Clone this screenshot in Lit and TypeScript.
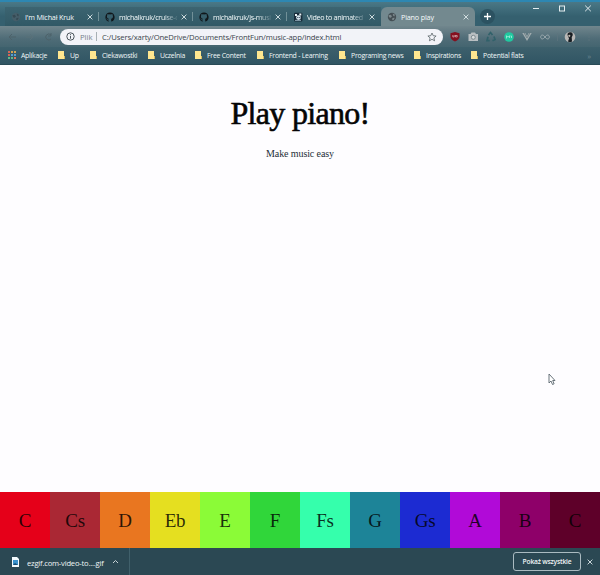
import { LitElement, html, svg, css } from "lit";
import { customElement } from "lit/decorators.js";

const globe = (c: string, d: string) => svg`<circle cx="5" cy="5" r="4.2" fill=${c}/><path d="M1.5 3.2 3.6 2.8 5 4.3 3.8 5.8 2 5.2ZM5.8 1.4 8 2.8 7.2 4.6 6 3.6ZM5.4 6 7.8 5.8 6.4 8.2 5.2 8Z" fill=${d}/>`;
const github = svg`<path fill="#10171b" d="M5 .4a4.7 4.7 0 0 0-1.5 9.1c.3 0 .3-.1.3-.3v-.8c-1.2.2-1.6-.3-1.8-.8-.1-.2-.3-.6-.6-.7-.2-.1-.4-.4 0-.4s.7.4.8.5c.5.8 1.2.6 1.6.4 0-.3.2-.5.3-.7-1.1-.1-2.2-.5-2.2-2.3 0-.5.2-.9.5-1.3 0-.1-.2-.6.1-1.2 0 0 .4-.1 1.300.5a4.3 4.3 0 0 1 2.3 0c.9-.6 1.3-.5 1.3-.5.3.6.1 1.1.1 1.2.3.4.5.8.5 1.3 0 1.8-1.1 2.2-2.2 2.3.2.2.4.5.4.9v1.6c0 .2.1.3.3.3A4.7 4.7 0 0 0 5 .4Z"/>`;
const gif = svg`<rect x="1" y=".8" width="8.4" height="8.6" rx="1" fill="#182c3a"/><path d="M2 2h2v2H2zM6.3 1.5h2v2h-2z" fill="#e9f3f6"/><circle cx="5.5" cy="5.6" r="2.4" fill="#d4e2ea"/><path d="M4.3 5h1v1h-1zM6.3 5h1v1h-1z" fill="#243b52"/><path d="M2 8.4h6" stroke="#8aa3b1"/>`;

const tabs = [
  { title: "I'm Michał Kruk", icon: globe("#455e69", "#354a54") },
  { title: "michalkruk/cruise-c", icon: github, fade: true },
  { title: "michalkruk/js-musi", icon: github, fade: true },
  { title: "Video to animated", icon: gif, fade: true },
  { title: "Piano play", icon: globe("#444f54", "#7c888c"), active: true },
];
const bookmarks: [string, number][] = [
  ["Up", 32], ["Ciekawostki", 58], ["Uczelnia", 47], ["Free Content", 62],
  ["Frontend - Learning", 82], ["Programing news", 75], ["Inspirations", 57], ["Potential flats", 60],
];
const keys: [string, string][] = [
  ["C", "#e50019"], ["Cs", "#aa2834"], ["D", "#e97620"], ["Eb", "#e5df20"],
  ["E", "#8bfb37"], ["F", "#30d63a"], ["Fs", "#35ffac"], ["G", "#1d8498"],
  ["Gs", "#1c2bd2"], ["A", "#b10ad8"], ["B", "#8e0069"], ["C", "#5e0029"],
];
const cross = html`<svg class="cross" viewBox="0 0 6 6"><path d="M.6.6 5.4 5.4M5.4.6.6 5.4"/></svg>`;

@customElement("app-root")
export class AppRoot extends LitElement {
  static styles = css`
    :host { display: flex; flex-direction: column; position: relative; width: 600px; height: 575px; overflow: hidden; background: #fefdff; font-family: "Open Sans", "Noto Sans", sans-serif; }
    * { box-sizing: border-box; }
    svg { display: block; flex: none; }
    .strip { display: flex; height: 26px; padding-left: 5px; border-top: 2px solid #2d87b2; background: linear-gradient(#4a7886, #35606f 60%); }
    .tab { display: flex; align-items: center; width: 94px; height: 19px; margin-top: 5px; padding: 0 6px; gap: 4px; color: #f4fafb; background: linear-gradient(90deg, transparent 93px, #719098 93px) 0 5px / 94px 9px no-repeat, linear-gradient(#3c6471, #315966); }
    .tab.active { background: #73898f; border-radius: 6px 6px 0 0; }
    .tab.before { background: linear-gradient(#3c6471, #315966); }
    .icon { width: 10px; height: 10px; }
    .title { width: 58px; white-space: nowrap; font-size: 7.2px; line-height: 12px; letter-spacing: -.17px; }
    .fade { letter-spacing: -.32px; -webkit-mask-image: linear-gradient(90deg, #000 76%, rgba(0, 0, 0, .15)); }
    .cross { width: 6px; height: 6px; fill: none; stroke: #dce6e9; stroke-width: .9; }
    .plus { width: 15px; height: 15px; margin: 7px 0 0 5px; }
    .window { width: 72px; height: 14px; margin-left: auto; }
    .toolbar { display: flex; align-items: center; height: 21px; background: linear-gradient(#71868d, #4f6c77 60%, #446570); }
    .nav { width: 60px; height: 20px; }
    .address { display: flex; align-items: center; width: 383px; height: 16px; padding: 0 6px; border-radius: 8px; background: #f2f3f8; font-size: 7.7px; color: #39434b; white-space: nowrap; }
    .info { width: 9px; height: 9px; }
    .file { width: 22px; padding-left: 5px; color: #75808a; }
    .divider { width: 1px; height: 9px; margin: 0 5px 0 -1px; background: #a7b0b5; }
    .url { letter-spacing: -.14px; }
    .star { width: 10px; height: 10px; margin-left: auto; }
    .extensions { width: 157px; height: 20px; }
    .bookmarks { display: flex; align-items: center; height: 18px; padding: 0 0 1px 8px; background: linear-gradient(#3d606c, #305564); border-bottom: 1px solid #294b57; color: #f1f7f8; font-size: 6.9px; font-weight: 500; letter-spacing: -.24px; white-space: nowrap; }
    .bookmark { display: flex; align-items: center; height: 16px; }
    .apps { width: 50px; }
    .apps svg { width: 8px; height: 8px; margin-right: 5px; }
    .folder { width: 7px; height: 8px; margin-right: 5px; }
    .more { margin-left: auto; padding-right: 9px; color: #6b858e; font-size: 8px; }
    main { display: flex; flex: 1; flex-direction: column; align-items: center; }
    h1 { margin: 28px 0 0; color: #050505; font: 400 32px/40px "Liberation Serif", serif; letter-spacing: -.7px; -webkit-text-stroke: .6px #050505; }
    .sub { margin: 14px 0 0; font: 10px/14px "Liberation Serif", serif; letter-spacing: -.1px; color: #242d36; }
    .keys { display: grid; grid-template-columns: repeat(12, 50px); height: 56px; }
    .key { display: flex; align-items: center; justify-content: center; padding-top: 1px; font: 19px/22px "Liberation Serif", serif; letter-spacing: -.2px; color: rgba(0, 0, 0, .82); }
    .downloads { display: flex; align-items: center; height: 27px; background: #2b4853; color: #f0f5f6; white-space: nowrap; }
    .item { display: flex; align-items: center; width: 130px; height: 27px; padding-left: 11px; border-right: 1px solid #40606b; }
    .thumb { width: 9px; height: 10px; }
    .name { width: 79px; margin-left: 7px; padding-top: 2px; font-size: 7.6px; letter-spacing: -.2px; }
    .caret { width: 7px; height: 5px; margin-left: 6px; }
    .show { display: flex; align-items: center; justify-content: center; width: 68px; height: 19px; margin-left: auto; border: 1px solid #aabbc1; border-radius: 3px; font-size: 6.7px; font-weight: 600; letter-spacing: -.2px; }
    .downloads > .cross { margin: 0 7px 0 6px; }
    .cursor { position: absolute; left: 548px; top: 373px; width: 8px; height: 13px; }
  `;

  render() {
    return html`
      <div class="strip">
        ${tabs.map((t, i) => html`<div class="tab ${t.active ? "active" : i === 3 ? "before" : ""}">
          <svg class="icon" viewBox="0 0 10 10">${t.icon}</svg><span class="title ${t.fade ? "fade" : ""}">${t.title}</span>${cross}
        </div>`)}
        <svg class="plus" viewBox="0 0 15 15"><circle cx="7.5" cy="7.5" r="7.5" fill="#2c5261"/><path d="M7.5 4v7M4 7.5h7" stroke="#fff" stroke-width="1.3"/></svg>
        <svg class="window" viewBox="0 0 72 14"><g fill="none" stroke="#e4edf0"><path d="M5 6.5h6"/><rect x="31.5" y="4" width="5" height="5"/><path d="m57.2 3.6 5.6 5.6M62.8 3.6l-5.6 5.6"/></g></svg>
      </div>
      <div class="toolbar">
        <svg class="nav" viewBox="0 0 60 20"><g fill="none" stroke="#4d626a"><path d="M16 10H9M12 7l-3 3 3 3"/><path d="M26 10h7M30 7l3 3-3 3" stroke="#597079"/><path d="M51 8a3 3 0 1 0 0 4M51 6v3h-3"/></g></svg>
        <div class="address">
          <svg class="info" viewBox="0 0 9 9"><circle cx="4.5" cy="4.5" r="3.7" fill="none" stroke="#4b555b"/><path d="M4.5 4v2.7M4.5 2.2v1" stroke="#4b555b"/></svg>
          <span class="file">Plik</span><span class="divider"></span>
          <span class="url">C:/Users/xarty/OneDrive/Documents/FrontFun/music-app/index.html</span>
          <svg class="star" viewBox="0 0 10 10"><path d="m5 1 1.2 2.7 2.9.3-2.2 1.9.7 2.9L5 7.3 2.4 8.8l.7-2.9L.9 4l2.9-.3Z" fill="none" stroke="#5b646a" stroke-width=".8"/></svg>
        </div>
        <svg class="extensions" viewBox="0 0 157 20">
          <path d="m12 5 4.5 1.3v3.2q0 3-4.5 5-4.5-2-4.5-5V6.3Z" fill="#85101f"/><path d="M9.8 8v2h1.4V8M12.5 8v2h1.7V8.5h-1.5" fill="none" stroke="#e4ccd0" stroke-width=".6"/>
          <path d="M25.5 7h2l1-1.5h3.5l1 1.5h2v7h-9.5Z" fill="#b9bfc2"/><circle cx="30.3" cy="10.3" r="2" fill="#d8dcdd" stroke="#7c898e"/>
          <g fill="none" stroke="#31616a" stroke-width="1.7"><path d="m45.5 8 2-2.5 2 2.5M51 9.5l1 3-2.5 1.2M46.7 13.7H44l1-4"/></g>
          <circle cx="66" cy="10" r="4.8" fill="#20c9a0"/><path d="M63.5 11.5V8.7l1.5 1.5L66.5 8.7V11M67.5 9h1v2" fill="none" stroke="#b8f7e4" stroke-width=".7"/>
          <path d="M79.3 6h3l1.7 3 1.7-3h3L84 14Z" fill="#a2adb0"/><path d="m81.2 6 2.8 5 2.8-5" fill="none" stroke="#73868c"/>
          <path d="M102 10c-2-3-4.3-2.2-4.3 0s2.3 3 4.3 0c2-3 4.3-2.2 4.3 0s-2.3 3-4.3 0Z" fill="none" stroke="#9dabb0"/>
          <path d="M114.500 6v8" stroke="#5d747d" stroke-width=".8"/>
          <circle cx="127" cy="10" r="5.3" fill="#b8b7b5"/><path d="M124.500 8q0-3 3-2.8 2.6.4 2.2 3l-1 2 .3 4.3q-2 1-4 0l1-3Z" fill="#171d22"/><circle cx="126.3" cy="8.8" r="1.1" fill="#c2b8b0"/>
          <g fill="#60767d"><circle cx="146" cy="7" r=".7"/><circle cx="146" cy="10" r=".7"/><circle cx="146" cy="13" r=".7"/></g>
        </svg>
      </div>
      <div class="bookmarks">
        <div class="bookmark apps"><svg viewBox="0 0 8 8"><path d="M0 0h2v2H0M0 3h2v2H0" fill="#d66556"/><path d="M3 0h2v2H3M6 0h2v2H6" fill="#d1a353"/><path d="M3 3h2v2H3M6 3h2v2H6" fill="#559cd1"/><path d="M0 6h2v2H0M3 6h2v2H3" fill="#5fba88"/><path d="M6 6h2v2H6" fill="#dc785e"/></svg>Aplikacje</div>
        ${bookmarks.map(([name, width]) => html`<div class="bookmark" style="width:${width}px"><svg class="folder" viewBox="0 0 7 8"><path d="M0 0h6v5h1v3H0Z" fill="#ffe790"/><path d="M6 5v3h1V5Z" fill="#d3ba62"/></svg>${name}</div>`)}
        <span class="more">»</span>
      </div>
      <main><h1>Play piano!</h1><p class="sub">Make music easy</p></main>
      <div class="keys">${keys.map(([n, c]) => html`<div class="key" style="background:${c}">${n}</div>`)}</div>
      <div class="downloads">
        <div class="item"><svg class="thumb" viewBox="0 0 9 10"><path d="M1 0h5l2 2v8H1Z" fill="#f4fafc"/><rect x="2" y="3" width="5" height="5" fill="#3b94ce"/><path d="m2 8 2-2 3 2Z" fill="#174c72"/></svg><span class="name">ezgif.com-video-to....gif</span><svg class="caret" viewBox="0 0 7 5"><path d="m1 4 2.5-2.5L6 4" fill="none" stroke="#c9d4d8"/></svg></div>
        <div class="show">Pokaż wszystkie</div>${cross}
      </div>
      <svg class="cursor" viewBox="0 0 8 13"><path d="M1 1v9l2-2 1.5 3.5 1.6-.7L4.7 7.5H7Z" fill="#fff" stroke="#59656d" stroke-width=".9"/></svg>
    `;
  }
}
